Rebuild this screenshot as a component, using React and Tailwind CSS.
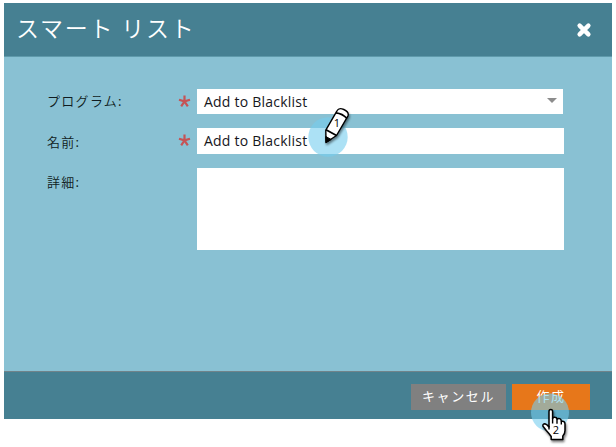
const jp = "font-['Noto_Sans_CJK_JP',sans-serif]";

function Field({ label, required, labelOffset, children }) {
  return (
    <div className="flex items-start">
      <div className={`${jp} ${labelOffset} w-[131px] text-[13px] leading-5 tracking-[1.3px] font-[350] text-[#101c21]`}>{label}</div>
      <div className="flex w-[19px] pt-[6px]">
        {required && (
          <svg width="13" height="13" viewBox="0 0 13 13" stroke="#c65355" strokeWidth="2.2" fill="none">
            <path d="M6.5 6.4V0.5M6.5 6.4L1 4.8M6.5 6.4L12 4.8M6.5 6.4L3.2 11.4M6.5 6.4L9.8 11.4" />
          </svg>
        )}
      </div>
      {children}
    </div>
  );
}

function PencilMarker() {
  return (
    <svg className="absolute left-[300px] top-[98px]" width="60" height="65" viewBox="300 98 60 65">
      <circle cx="328" cy="137" r="19.7" fill="#74cdee" fillOpacity="0.6" />
      <g className="drop-shadow-[1px_2px_1px_rgba(0,0,0,0.45)]">
        <path d="M326 142.5L325.8 130.2L337 110.8Q338.8 107.3 343.8 109.5Q349.3 112 348 115.8L336.5 135.5Z" fill="#fff" stroke="#000" strokeWidth="1.4" strokeLinejoin="round" />
        <path d="M326 142.5L325.8 136.5L331.2 139.5Z" fill="#000" stroke="#000" />
        <path d="M326 129.8L336.5 135.5M336 112.8Q342.5 113.5 347 118.5" fill="none" stroke="#000" strokeWidth="1.8" />
      </g>
      <text x="337" y="127.3" textAnchor="middle" className="font-['Open_Sans',sans-serif] text-[11px]" fill="#000">1</text>
    </svg>
  );
}

function HandMarker() {
  return (
    <svg className="absolute left-[525px] top-[388px]" width="60" height="59" viewBox="525 388 60 59">
      <circle cx="550" cy="412.5" r="19" fill="#74cdee" fillOpacity="0.6" />
      <g className="drop-shadow-[1px_2px_1px_rgba(0,0,0,0.5)]">
        <path d="M549 427V411.5Q549 409.5 550.8 409.5Q552.6 409.5 552.6 411.5V418.5Q553 417 555 417.3Q557 417.5 557 419.3Q558 418 559.8 418.6Q561.3 419.3 561.3 421.3Q564.8 420.5 565 424V430.5Q565 434 562.8 436V439.4H551.2V436.5Q549.5 434 546.3 430.5L543 426.3Q542.5 424 544.5 423.7Q546.5 423.7 549 427Z" fill="#fff" stroke="#000" strokeWidth="1.5" strokeLinejoin="round" />
        <path d="M549 426V429.5M552.6 418V423.5M557 419.3V423.7M561.3 421.3V424.5" stroke="#000" strokeWidth="1.4" />
      </g>
      <text x="556" y="433.5" textAnchor="middle" className="font-['Open_Sans',sans-serif] text-[11px]" fill="#000">2</text>
    </svg>
  );
}

export default function App() {
  return (
    <main className="relative h-[447px] w-[616px] overflow-hidden bg-white pl-1 pt-[3px]">
      <section className="flex h-[416px] w-[608px] flex-col bg-[#89c1d3]">
        <header className="flex h-[54px] items-center justify-between border-b border-[#5f9aab] bg-[#468092] pl-3 pr-5">
          <h1 className={`${jp} -mt-1 text-[23px] font-[350] tracking-[1.75px] text-white`}>スマート リスト</h1>
          <button className="mt-px" aria-label="閉じる">
            <svg width="16" height="16" viewBox="0 0 16 16" stroke="#fff" strokeWidth="4.4" strokeLinecap="round">
              <path d="M3.6 3.6L12.4 12.4M12.4 3.6L3.6 12.4" />
            </svg>
          </button>
        </header>
        <div className="flex flex-1 flex-col pl-[43px] pt-8 font-['Open_Sans',sans-serif] text-sm tracking-[0.22px] text-[#16161c]">
          <div className="h-[39px]">
            <Field label="プログラム:" labelOffset="mt-[2px]" required>
              <div className="flex h-[25px] w-[366px] items-center justify-between bg-white px-[7px]">
                <span>Add to Blacklist</span>
                <svg className="-mr-px -mt-[3px]" width="10" height="5" viewBox="0 0 10 5"><path d="M0 0H10L5 5Z" fill="#8c8c8c" /></svg>
              </div>
            </Field>
          </div>
          <div className="h-10">
            <Field label="名前:" labelOffset="mt-1" required>
              <div className="flex h-[26px] w-[367px] items-center bg-white pl-[7px]">Add to Blacklist</div>
            </Field>
          </div>
          <Field label="詳細:" labelOffset="mt-1">
            <div className="h-[82px] w-[367px] bg-white" />
          </Field>
        </div>
        <footer className={`${jp} flex h-12 justify-end gap-[6px] border-t border-[#70838a] bg-[#468092] pr-[22px] pt-3 text-[13px] font-normal leading-none tracking-[1.6px] text-white`}>
          <button className="h-[26px] w-[95px] bg-[#808080] pb-[3px]">キャンセル</button>
          <button className="h-[26px] w-[78px] bg-[#e7771a] pb-[3px]">作成</button>
        </footer>
      </section>
      <PencilMarker />
      <HandMarker />
    </main>
  );
}
